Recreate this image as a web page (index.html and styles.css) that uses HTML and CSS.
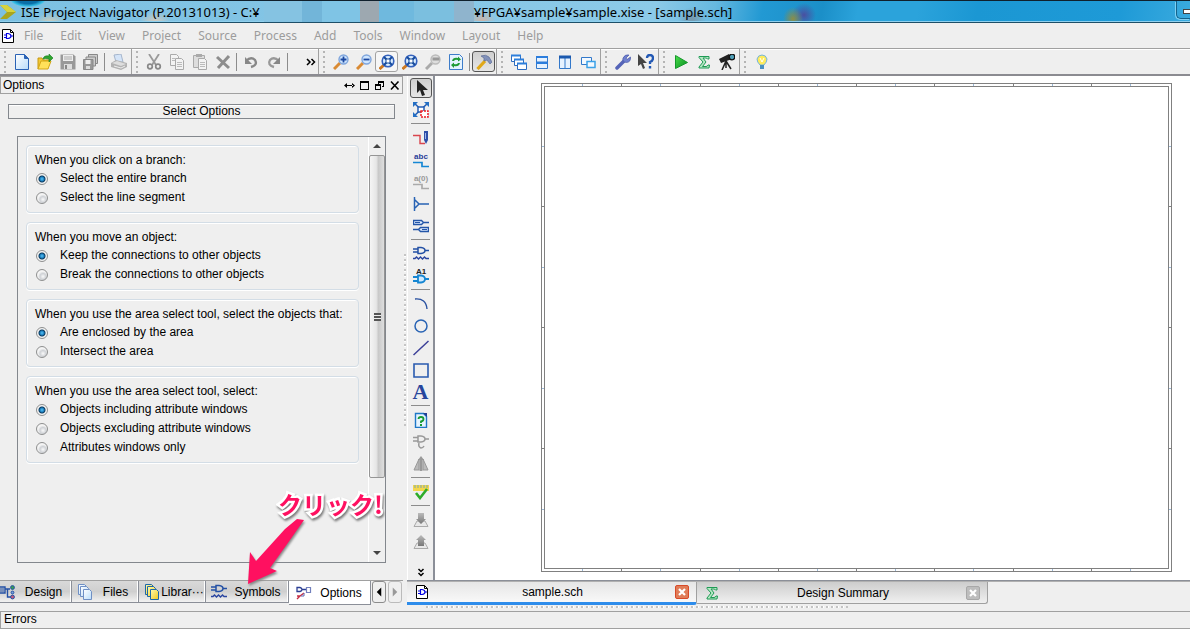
FILE: index.html
```html
<!DOCTYPE html>
<html lang="en">
<head>
    <meta charset="UTF-8">
    <meta name="viewport" content="width=device-width, initial-scale=1.0">
    <title>ISE Project Navigator</title>
    <link rel="stylesheet" href="styles.css">
</head>
<body>
    <!-- shared gradients and icons used more than once -->
    <svg class="defs" aria-hidden="true">
        <defs>
            <linearGradient id="g-page" x1="0" y1="0" x2="1" y2="1"><stop offset="0" stop-color="#fff"/><stop offset="1" stop-color="#b9dcfa"/></linearGradient>
            <linearGradient id="g-gray" x1="0" y1="0" x2="0" y2="1"><stop offset="0" stop-color="#bbb"/><stop offset="1" stop-color="#777"/></linearGradient>
            <linearGradient id="g-green" x1="0" y1="0" x2="1" y2="1"><stop offset="0" stop-color="#4be04b"/><stop offset="1" stop-color="#058a20"/></linearGradient>
            <linearGradient id="g-yellow" x1="0" y1="0" x2="1" y2="1"><stop offset="0" stop-color="#fffbb0"/><stop offset="1" stop-color="#f2c81c"/></linearGradient>
        </defs>
        <symbol id="i-sch" viewBox="0 0 16 16">
            <path d="M2.500 1.500h8l3 3v10h-11z" fill="#fff" stroke="#000"/>
            <path d="M10.500 1.500v3h3" fill="none" stroke="#000"/>
            <path d="M6.500 5.500h1.500q3 .5 3 2.500t-3 2.500h-1.500zM4 7h2.500M4 9.500h2.500M11 8h2" fill="none" stroke="#0000e0" stroke-width="1.200"/>
        </symbol>
        <symbol id="i-sigma" viewBox="0 0 16 16">
            <path d="M3 2.500h10v2.500h-1.500q-.5-1-2-1h-2.500l3 4-3.500 4.500h3.500q1.500 0 2-1.500h1.500l-.5 3h-10v-1l4-5-4-4.500z" fill="#b5e8c4" stroke="#1f9a55"/>
        </symbol>
        <symbol id="i-gate" viewBox="0 0 16 16">
            <path d="M5 1.500h3q4 .5 4 3t-4 3h-3zM0 3h5M0 6h5M12 4.500h4" fill="none" stroke="#2350a5" stroke-width="1.500"/>
            <path d="M0 12.500h2l1.500-1.500 2 2 2-2 2 2 2-2 1.500 1.500h3" fill="none" stroke="#2a45a0" stroke-width="1.400"/>
        </symbol>
        <symbol id="i-zoomfull" viewBox="0 0 16 16">
            <path d="M5.500 10.500l-5 4.500" stroke="#cf7a22" stroke-width="3"/>
            <circle cx="9" cy="7" r="5.800" fill="#dbeeff" stroke="#3562bd" stroke-width="1.600"/>
            <path d="M5 3l8 8M13 3l-8 8" stroke="#154a9b" stroke-width="2"/>
            <rect x="7" y="5" width="4" height="4" fill="#fff" stroke="#154a9b"/>
        </symbol>
    </svg>

    <header class="titlebar">
        <svg class="app-logo" viewBox="0 0 16 16"><path d="M0 1h7l9 7-9 7H0l7-7z" fill="#aaa51d"/><path d="M0 1h7l9 7H7z" fill="#d6d33e"/></svg>
        <span class="title-text">ISE Project Navigator (P.20131013) - C:¥</span>
        <span class="title-mask"></span>
        <span class="title-text">¥FPGA¥sample¥sample.xise - [sample.sch]</span>
        <button class="minimize" aria-label="Minimize"><span></span></button>
    </header>

    <nav class="menubar">
        <svg class="menu-icon"><use href="#i-sch"/></svg>
        <a href="#">File</a>
        <a href="#">Edit</a>
        <a href="#">View</a>
        <a href="#">Project</a>
        <a href="#">Source</a>
        <a href="#">Process</a>
        <a href="#">Add</a>
        <a href="#">Tools</a>
        <a href="#">Window</a>
        <a href="#">Layout</a>
        <a href="#">Help</a>
    </nav>

    <div class="toolbars">
        <div class="toolbar">
            <button class="tool" aria-label="New"><svg viewBox="0 0 16 16"><path d="M1.500.5h9l4 4v11h-13z" fill="url(#g-page)" stroke="#2a62b5"/><path d="M10.500.5v4h4" fill="#2a62b5" stroke="#2a62b5"/></svg></button>
            <button class="tool" aria-label="Open"><svg viewBox="0 0 16 16"><path d="M1 15V4h4l1 2h6v3" fill="#f3c935" stroke="#c79812"/><path d="M1 15l3-8h10l-3 8z" fill="#ffe15a" stroke="#d3a515"/><path d="M6 5q1-4 6-3V0l4 4-4 4V5q-4-1-6 0z" fill="#2fa52f" stroke="#137a1c" stroke-width=".6"/></svg></button>
            <button class="tool" aria-label="Save"><svg viewBox="0 0 16 16"><path d="M.5.5h13l2 2v13H.5z" fill="#999"/><path d="M3 1h10v6H3z" fill="#eee"/><path d="M4 10h8v5H4z" fill="#ddd"/><path d="M5 11h2v4H5z" fill="#888"/><path d="M4 3h8M4 5h8" stroke="#aaa"/></svg></button>
            <button class="tool" aria-label="Save All"><svg viewBox="0 0 16 16"><path d="M5.500.5h9v9h-9z" fill="#ccc" stroke="#888"/><path d="M3 3h9.500v9H3z" fill="#ccc" stroke="#888"/><path d="M.5 5.500h9.500v10H.5z" fill="#999" stroke="#888"/><path d="M2.500 6h5v4h-5z" fill="#eee"/><path d="M3 12h4v3H3z" fill="#ddd"/></svg></button>
            <span class="sep"></span>
            <button class="tool" aria-label="Print"><svg viewBox="0 0 16 16"><path d="M3 1l7-1 2 8H5z" fill="#d4e4f8" stroke="#a5b5cb"/><path d="M0 9l5-3 11 3v4l-6 3-10-3z" fill="#b2b2b2"/><path d="M1 9l5-2 9 3-5 2z" fill="#ddd"/><path d="M3 12l7 2 4-2" fill="none" stroke="#eee"/></svg></button>
        </div>
        <div class="toolbar">
            <button class="tool" aria-label="Cut"><svg viewBox="0 0 16 16"><path d="M3 0l7 11M13 0L6 11" stroke="#999" stroke-width="1.800"/><circle cx="4" cy="12.500" r="2.300" fill="none" stroke="#888" stroke-width="1.700"/><circle cx="12" cy="12.500" r="2.300" fill="none" stroke="#888" stroke-width="1.700"/></svg></button>
            <button class="tool" aria-label="Copy"><svg viewBox="0 0 16 16"><path d="M1.500.5h6l2 2v9h-8z" fill="#f3f3f3" stroke="#aaa"/><path d="M6.500 4.500h6l2 2v9h-8z" fill="#f3f3f3" stroke="#aaa"/><path d="M8 8.500h5M8 10.500h5M8 12.500h5M3 4.500h3M3 6.500h3" stroke="#bbb"/></svg></button>
            <button class="tool" aria-label="Paste"><svg viewBox="0 0 16 16"><path d="M1.500 1.500h11v12h-11z" fill="#ddd" stroke="#aaa"/><path d="M4 0h6v3H4z" fill="#aaa"/><path d="M6.500 4.500h6l2 2v9h-8z" fill="#f3f3f3" stroke="#aaa"/><path d="M8 8.500h5M8 10.500h5M8 12.500h5" stroke="#bbb"/></svg></button>
            <button class="tool" aria-label="Delete"><svg viewBox="0 0 16 16"><path d="M2 3l12 11M14 2L3 14" stroke="#8d8d8d" stroke-width="3"/></svg></button>
            <span class="sep"></span>
            <button class="tool" aria-label="Undo"><svg viewBox="0 0 16 16"><path d="M3 7q5-5 9-1 3 5-4 7" fill="none" stroke="#888" stroke-width="2.400"/><path d="M2 3v7h7z" fill="#888"/></svg></button>
            <button class="tool" aria-label="Redo"><svg viewBox="0 0 16 16"><path d="M13 7Q8 2 4 6q-3 5 4 7" fill="none" stroke="#999" stroke-width="2.400"/><path d="M14 3v7H7z" fill="#888"/></svg></button>
            <span class="sep"></span>
            <button class="tool more" aria-label="More tools"><svg viewBox="0 0 16 16"><path d="M6 5l3 3-3 3M10.500 5l3 3-3 3" fill="none" stroke="#000" stroke-width="1.500"/></svg></button>
        </div>
        <div class="toolbar">
            <button class="tool" aria-label="Zoom In"><svg viewBox="0 0 16 16"><path d="M7 9l-6 6" stroke="#d98a33" stroke-width="3"/><circle cx="10.500" cy="5.500" r="4.500" fill="#cfe6ff" stroke="#7fa5dc" stroke-width="1.400"/><path d="M7.500 5.500h6M10.500 2.500v6" stroke="#1c48a0" stroke-width="1.800"/></svg></button>
            <button class="tool" aria-label="Zoom Out"><svg viewBox="0 0 16 16"><path d="M7 9l-6 6" stroke="#d98a33" stroke-width="3"/><circle cx="10.500" cy="5.500" r="4.500" fill="#cfe6ff" stroke="#7fa5dc" stroke-width="1.400"/><path d="M7.500 5.500h6" stroke="#1c48a0" stroke-width="1.800"/></svg></button>
            <button class="tool checked" aria-label="Zoom to Full View"><svg><use href="#i-zoomfull"/></svg></button>
            <button class="tool" aria-label="Zoom to Box"><svg><use href="#i-zoomfull"/></svg></button>
            <button class="tool" aria-label="Zoom to Selected"><svg viewBox="0 0 16 16"><path d="M7 9l-6 6" stroke="#aaa" stroke-width="3"/><circle cx="10.500" cy="5.500" r="4.500" fill="#ddd" stroke="#bbb" stroke-width="1.400"/><path d="M7.500 3.500h7v3h-7z" fill="#999"/></svg></button>
            <button class="tool" aria-label="Refresh"><svg viewBox="0 0 16 16"><path d="M1.500.5h10l3 3v12h-13z" fill="#e4f2ff" stroke="#3d7cc9"/><path d="M4 7q1-4 6-3V2.500L13 5.500l-3 2V6Q7 5 6 7z" fill="#1e9a35"/><path d="M12 9q-1 4-6 3v2l-3-3 3-2.500V10q3 1 4-1z" fill="#1e9a35"/></svg></button>
            <span class="sep"></span>
            <button class="tool pressed" aria-label="Build"><svg viewBox="0 0 16 16"><path d="M1.500 15L9 7" stroke="#e0a818" stroke-width="3.200"/><path d="M5 2q5-2 8 1l3 5-2 2-3-4-3 1V4z" fill="#8191ba" stroke="#5d6d98" stroke-width=".7"/></svg></button>
        </div>
        <div class="toolbar">
            <button class="tool" aria-label="Cascade"><svg viewBox="0 0 16 16"><g fill="#fff" stroke="#2d6cc0"><path d="M.5 1.500h9v6h-9z"/><path d="M3.500 5.500h9v6h-9z"/><path d="M6.500 9.500h9v6h-9z"/></g><path d="M0 1.500h10M3 5.500h10M6 9.500h10" stroke="#2d7fdc" stroke-width="2"/></svg></button>
            <button class="tool" aria-label="Tile Horizontally"><svg viewBox="0 0 16 16"><path d="M2.500 2.500h11v12h-11zM2 8h12" fill="#e6f2ff" stroke="#3278ca"/><path d="M2 3h12M2 9h12" stroke="#2b7ddd" stroke-width="2"/></svg></button>
            <button class="tool" aria-label="Tile Vertically"><svg viewBox="0 0 16 16"><path d="M2.500 2.500h11v12h-11zM8 2v12" fill="#e6f2ff" stroke="#3278ca"/><path d="M2 3h12" stroke="#1b59ae" stroke-width="3"/></svg></button>
            <button class="tool" aria-label="Float"><svg viewBox="0 0 16 16"><path d="M1.500 3.500h10v7h-10z" fill="#f3f9ff" stroke="#3278ca"/><path d="M7 7.500h8v6H7z" fill="#f3f9ff" stroke="#3ba1e8" stroke-width="1.500"/></svg></button>
        </div>
        <div class="toolbar">
            <button class="tool" aria-label="Preferences"><svg viewBox="0 0 16 16"><path d="M2 14l7-7" stroke="#5564b8" stroke-width="3.500" stroke-linecap="round"/><path d="M14 1l-3 3 1 1.500L15.500 3Q16 8 11.500 8.500 7 8 8 4 10 0 14 1z" fill="#6f80cf" stroke="#4857a8" stroke-width=".7"/></svg></button>
            <button class="tool" aria-label="Help"><svg viewBox="0 0 16 16"><path d="M0 0v12l3-2 2 5 2-1-2-5h4z" fill="#444"/><path d="M9 4q0-3 3-3t3 3-3 4v2" fill="none" stroke="#2258b4" stroke-width="2.300"/><path d="M10.800 12h2.400v2.500h-2.400z" fill="#2258b4"/></svg></button>
        </div>
        <div class="toolbar">
            <button class="tool" aria-label="Run"><svg viewBox="0 0 16 16"><path d="M2.500 1.500l12 7-12 6z" fill="url(#g-green)" stroke="#16982c"/></svg></button>
            <button class="tool" aria-label="Summary"><svg><use href="#i-sigma"/></svg></button>
            <button class="tool" aria-label="Analyze"><svg viewBox="0 0 16 16"><path d="M0 5l10-5 3 5L2 9z" fill="#222"/><circle cx="13" cy="3" r="2.800" fill="#4f9fb8" stroke="#111" stroke-width="1.300"/><path d="M7 7l-4 9M7 7v7M7 7l5 8" stroke="#222" stroke-width="1.500"/></svg></button>
        </div>
        <div class="toolbar last">
            <button class="tool" aria-label="Tips"><svg viewBox="0 0 16 16"><path d="M6 11Q3 8 3 5q1-4 5-4t5 4q0 3-3 6z" fill="#ffeb5c" stroke="#73b3df"/><path d="M6 4l2 4 2-4" fill="none" stroke="#fff"/><path d="M6 11h4v4H6z" fill="#4a90c0"/></svg></button>
        </div>
    </div>

    <main class="workspace">
        <aside class="dock">
            <div class="dock-title">
                <h2>Options</h2>
                <button aria-label="Move"><svg viewBox="0 0 11 11"><path d="M0 5.500L3 3v5zM11 5.500L8 3v5zM2 5h7v1H2z"/></svg></button>
                <button aria-label="Maximize"><svg viewBox="0 0 11 11"><path d="M1 1h9v9H1zM2 3v6h7V3z" fill-rule="evenodd"/></svg></button>
                <button aria-label="Float panel"><svg viewBox="0 0 11 11"><path d="M4 1h6v6H8V6h1V3H5v1H4zM1 4h6v6H1zM2 6v3h4V6z" fill-rule="evenodd"/></svg></button>
                <button aria-label="Close panel"><svg viewBox="0 0 11 11"><path d="M2 1.500l7.500 8M9.500 1.500L2 9.500" stroke="#000" stroke-width="1.600"/></svg></button>
            </div>
            <h3 class="select-title">Select Options</h3>
            <div class="options-frame">
                <form class="options">
                    <fieldset>
                        <legend>When you click on a branch:</legend>
                        <label><input type="radio" name="branch" checked>Select the entire branch</label>
                        <label><input type="radio" name="branch">Select the line segment</label>
                    </fieldset>
                    <fieldset>
                        <legend>When you move an object:</legend>
                        <label><input type="radio" name="move" checked>Keep the connections to other objects</label>
                        <label><input type="radio" name="move">Break the connections to other objects</label>
                    </fieldset>
                    <fieldset>
                        <legend>When you use the area select tool, select the objects that:</legend>
                        <label><input type="radio" name="area" checked>Are enclosed by the area</label>
                        <label><input type="radio" name="area">Intersect the area</label>
                    </fieldset>
                    <fieldset>
                        <legend>When you use the area select tool, select:</legend>
                        <label><input type="radio" name="attr" checked>Objects including attribute windows</label>
                        <label><input type="radio" name="attr">Objects excluding attribute windows</label>
                        <label><input type="radio" name="attr">Attributes windows only</label>
                    </fieldset>
                </form>
                <div class="scrollbar">
                    <span class="arrow up"></span>
                    <span class="thumb"><i></i></span>
                    <span class="arrow down"></span>
                </div>
            </div>
            <div class="dock-tabs">
                <button class="dock-tab design"><svg viewBox="0 0 16 16"><path d="M0 3h5v6H0M5 5h5M7.500 5v8H11" fill="none" stroke="#2350a5" stroke-width="1.400"/><path d="M0 5h4M0 7h4" stroke="#2350a5"/><circle cx="12.500" cy="3.500" r="1.900" fill="#3a9e54" stroke="#2350a5"/><circle cx="12.500" cy="8.500" r="1.400" fill="#7ba4dd" stroke="#2350a5"/><circle cx="12.500" cy="13" r="1.900" fill="#c65a7a" stroke="#2350a5"/></svg><span>Design</span></button>
                <button class="dock-tab files"><svg viewBox="0 0 16 16"><g fill="url(#g-page)" stroke="#6f8fc4"><path d="M1.500.5h6l2 2v8h-8z"/><path d="M3.500 2.500h6l2 2v8h-8z"/><path d="M6.500 5.500h6l2 2v8h-8z"/></g></svg><span>Files</span></button>
                <button class="dock-tab libraries"><svg viewBox="0 0 16 16"><g fill="url(#g-yellow)" stroke="#1d68a8"><path d="M1.500.5h6l2 2v8h-8z"/><path d="M3.500 2.500h6l2 2v8h-8z"/><path d="M6.500 5.500h6l2 2v8h-8z"/></g></svg><span>Librar···</span></button>
                <button class="dock-tab symbols"><svg><use href="#i-gate"/></svg><span>Symbols</span></button>
                <button class="dock-tab active"><svg viewBox="0 0 16 16"><path d="M1 2.500h3q2 .5 2 2t-2 2H1zM6 4.500h4" fill="none" stroke="#2b3f94" stroke-width="1.300"/><path d="M10.500 2.500h4v5h-4z" fill="none" stroke="#7280bd" stroke-width="1.200"/><path d="M1 11h3l4-3M1 14l3-3" fill="none" stroke="#c62f45" stroke-width="1.400"/><path d="M8 8v3H5" fill="none" stroke="#5a6cb8"/></svg><span>Options</span></button>
                <button class="tab-scroll" aria-label="Previous tabs"><svg viewBox="0 0 8 12"><path d="M7 0v12L1 6z" fill="#000"/></svg></button>
                <button class="tab-scroll" aria-label="Next tabs" disabled><svg viewBox="0 0 8 12"><path d="M1 0v12l6-6z" fill="#999"/></svg></button>
            </div>
            <div class="callout">
                <svg viewBox="0 0 60 70"><path d="M4 68l2-32 6 9 29-32 12-10 7 1-14 20-20 28 7 3z" fill="#ff1060"/></svg>
                <strong lang="ja">クリック!</strong>
            </div>
        </aside>

        <div class="splitter"></div>

        <section class="editor">
            <div class="editor-body">
                <div class="side-tools">
                    <button class="side-tool pressed" aria-label="Select"><svg viewBox="0 0 16 16"><path d="M4 0v13l3-3 2 6 3-1-2-5h5z" fill="#222"/></svg></button>
                    <button class="side-tool" aria-label="Zoom area"><svg viewBox="0 0 16 16"><path d="M1 1l14 13M15 1L1 14" stroke="#245eb5" stroke-width="1.600"/><path d="M0 0h5L0 5zM16 0h-5l5 5zM0 15h5l-5-5z" fill="#246fc4"/><rect x="5" y="5" width="6" height="5" fill="#fff" stroke="#245eb5" stroke-width="1.500"/><rect x="8" y="9" width="7" height="6" fill="#fff" stroke="#ee1c24" stroke-width="1.500" stroke-dasharray="2 1"/></svg></button>
                    <span class="side-sep"></span>
                    <button class="side-tool" aria-label="Add Wire"><svg viewBox="0 0 16 16"><path d="M0 5.500h7v8h5" fill="none" stroke="#d9464e" stroke-width="1.400"/><path d="M11 1h4v9l-2 4-2-4z" fill="#2e4ea8"/><path d="M12.500 3v6" stroke="#9db7eb"/></svg></button>
                    <button class="side-tool" aria-label="Add Net Name"><svg viewBox="0 0 16 16"><text x="8" y="7" class="glyph blue">abc</text><path d="M0 10.500h9v4h7" fill="none" stroke="#1687d4" stroke-width="1.700"/></svg></button>
                    <button class="side-tool" aria-label="Rename Bus"><svg viewBox="0 0 16 16"><text x="8" y="7" class="glyph gray">a(0)</text><path d="M0 10.500h9v4h7" fill="none" stroke="#aaa" stroke-width="1.700"/></svg></button>
                    <button class="side-tool" aria-label="Add Bus Tap"><svg viewBox="0 0 16 16"><path d="M1.500 1v14M2 4l4 4-4 4M6 8h10" fill="none" stroke="#2863b4" stroke-width="1.500"/></svg></button>
                    <button class="side-tool" aria-label="Add I/O Marker"><svg viewBox="0 0 16 16"><path d="M.5 2.500h8l2 2-2 2h-8zM10 4.500h6M15.500 9.500h-8l-2 2 2 2h8zM0 11.500h6" fill="#dbeaff" stroke="#2456a8" stroke-width="1.400"/><path d="M2 4.500h5M9 11.500h5" stroke="#2456a8"/></svg></button>
                    <span class="side-sep"></span>
                    <button class="side-tool" aria-label="Add Symbol"><svg><use href="#i-gate"/></svg></button>
                    <button class="side-tool" aria-label="Add Instance Name"><svg viewBox="0 0 16 16"><text x="8" y="6" class="glyph black">A1</text><path d="M5 7.500h3q4 .5 4 3.500t-4 3.500H5zM0 9h5M0 13h5M12 11h4" fill="#cfeaff" stroke="#1586d2" stroke-width="1.800"/></svg></button>
                    <span class="side-sep"></span>
                    <button class="side-tool" aria-label="Add Arc"><svg viewBox="0 0 16 16"><path d="M2 3q11-1 12 10" fill="none" stroke="#2850a0" stroke-width="1.400"/></svg></button>
                    <button class="side-tool" aria-label="Add Circle"><svg viewBox="0 0 16 16"><circle cx="8" cy="8" r="6" fill="none" stroke="#2863b4" stroke-width="1.500"/></svg></button>
                    <button class="side-tool" aria-label="Add Line"><svg viewBox="0 0 16 16"><path d="M.5 15L15.500 1" stroke="#3b3f98" stroke-width="1.500"/></svg></button>
                    <button class="side-tool" aria-label="Add Rectangle"><svg viewBox="0 0 16 16"><path d="M1 2h14v13H1z" fill="none" stroke="#2a5bb0" stroke-width="1.600"/></svg></button>
                    <button class="side-tool letter" aria-label="Add Text">A</button>
                    <span class="side-sep"></span>
                    <button class="side-tool" aria-label="Object Properties"><svg viewBox="0 0 16 16"><path d="M2.500 1.500h8l3 3v11h-11z" fill="#e6f4ff" stroke="#1f78c7" stroke-width="1.400"/><path d="M10 1h4v4z" fill="#233f90"/><path d="M5.500 7q0-2 2.500-2t2.500 2-2.500 2.500v1.500" fill="none" stroke="#169a30" stroke-width="1.800"/><path d="M7 12h2v2H7z" fill="#169a30"/></svg></button>
                    <button class="side-tool" aria-label="Rotate"><svg viewBox="0 0 16 16"><path d="M5 2h3q4 .5 4 3t-4 3H5zM0 3.500h5M0 7h5M12 5h4" fill="none" stroke="#999" stroke-width="1.500"/><path d="M6 9q-1 4 2 5 2 0 3-2" fill="none" stroke="#999" stroke-width="1.500"/></svg></button>
                    <button class="side-tool" aria-label="Mirror"><svg viewBox="0 0 16 16"><path d="M6 3v11H1zM10 3v11h5z" fill="#bbb" stroke="#999"/><path d="M8 0l3 4H9.500v11h-3V4H5z" fill="#999"/></svg></button>
                    <span class="side-sep"></span>
                    <button class="side-tool" aria-label="Check Schematic"><svg viewBox="0 0 16 16"><path d="M0 1h16v6H0z" fill="#f4d64b"/><path d="M2 1v3M5 1v3M8 1v3M11 1v3M14 1v3" stroke="#78a7b0"/><path d="M3 9l4 5 7-9" fill="none" stroke="#2eac2a" stroke-width="2.600"/></svg></button>
                    <span class="side-sep"></span>
                    <button class="side-tool" aria-label="Push into Symbol"><svg viewBox="0 0 16 16"><path d="M4 9h8l3 5.500H1z" fill="#e8e8e8" stroke="#aaa"/><path d="M5 1h6v6h2l-5 5-5-5h2z" fill="url(#g-gray)"/></svg></button>
                    <button class="side-tool" aria-label="Pop to Calling Schematic"><svg viewBox="0 0 16 16"><path d="M4 9h8l3 5.500H1z" fill="#e8e8e8" stroke="#aaa"/><path d="M8 1l5 5h-2v6H5V6H3z" fill="url(#g-gray)"/></svg></button>
                    <button class="side-tool overflow" aria-label="More"><svg viewBox="0 0 16 16"><path d="M5.500 4L8 6.500 10.500 4M5.500 8L8 10.500 10.500 8" fill="none" stroke="#000" stroke-width="1.500"/></svg></button>
                </div>
                <div class="canvas">
                    <div class="sheet">
                        <div class="ruler-x"><i></i><i></i><i></i><i></i><i></i><i></i><i></i><i></i></div>
                        <div class="ruler-y"><i></i><i></i><i></i><i></i></div>
                        <div class="sheet-page"></div>
                        <div class="ruler-y"><i></i><i></i><i></i><i></i></div>
                        <div class="ruler-x"><i></i><i></i><i></i><i></i><i></i><i></i><i></i><i></i></div>
                    </div>
                </div>
            </div>
            <div class="doc-tabs">
                <div class="doc-tab active">
                    <svg><use href="#i-sch"/></svg>
                    <a href="#">sample.sch</a>
                    <button aria-label="Close sample.sch"><svg viewBox="0 0 8 8"><path d="M1 1l6 6M7 1L1 7" stroke="#fff" stroke-width="2.200"/></svg></button>
                </div>
                <div class="doc-tab">
                    <svg><use href="#i-sigma"/></svg>
                    <a href="#">Design Summary</a>
                    <button aria-label="Close Design Summary"><svg viewBox="0 0 8 8"><path d="M1 1l6 6M7 1L1 7" stroke="#fff" stroke-width="2.200"/></svg></button>
                </div>
            </div>
        </section>
    </main>

    <div class="splitter-row"></div>
    <footer class="errors">Errors</footer>
</body>
</html>
```

FILE: styles.css
```css
*{
    box-sizing: border-box;
}
body{
    margin: 0;
    height: 100vh;
    display: flex;
    flex-direction: column;
    overflow: hidden;
    background-color: #efefef;
    color: #000;
    font-family: "Liberation Sans", "Noto Sans CJK JP", sans-serif;
    font-size: 12px;
}
button{
    margin: 0;
    padding: 0;
    border: 0;
    background: none;
    font: inherit;
    color: inherit;
}
svg{
    display: block;
    flex: none;
    width: 16px;
    height: 16px;
}
.defs{
    position: absolute;
    width: 0;
    height: 0;
}
h2,h3{
    margin: 0;
    font-size: 12px;
    font-weight: normal;
}

/* title bar */
.titlebar{
    flex: none;
    display: flex;
    align-items: center;
    height: 23px;
    border-top: 1px solid #10202c;
    border-bottom: 1px solid #1d4f68;
    box-shadow: inset 0 -1px #8fd0ee;
    background:
        radial-gradient(ellipse 18px 8px at 28px -2px, #0a6fa8 0 60%, #35c0e8 90%, transparent),
        radial-gradient(ellipse 16px 10px at 50px 22px, #d9cdb3, transparent),
        radial-gradient(ellipse 16px 12px at 155px 22px, #ddcbb8, transparent),
        radial-gradient(ellipse 14px 12px at 482px 20px, #cfb3a5, transparent),
        radial-gradient(ellipse 14px 12px at 692px 18px, #7796aa, transparent),
        radial-gradient(ellipse 10px 12px at 793px 18px, #8d8d45, transparent),
        radial-gradient(ellipse 12px 12px at 804px 14px, #4a4fa0, transparent),
        linear-gradient(100deg, #7cc0e2 0, #8ccae8 55%, #66b8e0 60%, #2299d3 64%, #1b8fc8 69%, #2ba3db 72%, #2ba3db 77%, #1b97d3 82%, #1e9ad7 94%, #3aaade 100%);
    font-family: "Noto Sans", "Noto Sans CJK JP", sans-serif;
    font-size: 13px;
    white-space: nowrap;
}
.app-logo{
    margin-right: 5px;
}
.title-mask{
    flex: none;
    align-self: stretch;
    width: 210px;
    margin-left: 4px;
    background: linear-gradient(90deg, #85c3e2 0 38px, #72b5d9 38px 58px, #7fc4e5 58px 96px, #9da8b0 96px 115px, #6fb9de 115px 150px, #7bbfdf 150px 190px, #8fb4cd 190px);
}
.minimize{
    align-self: flex-start;
    display: flex;
    justify-content: flex-end;
    align-items: center;
    width: 14px;
    height: 18px;
    margin-left: auto;
    border: 1px solid #14638c;
    border-width: 0 0 1px 1px;
    border-radius: 0 0 0 5px;
    box-shadow: -1px 1px #7fd0f2;
}
.minimize span{
    width: 7px;
    height: 5px;
    margin-top: 4px;
    border: 1px solid #444;
    border-right: 0;
    background-color: #fff;
}

/* menu */
.menubar{
    flex: none;
    display: flex;
    align-items: center;
    gap: 17px;
    height: 25px;
    font-family: "Noto Sans", sans-serif;
}
.menu-icon{
    margin-right: -9px;
}
.menubar a{
    color: #9c9c9c;
    text-decoration: none;
}

/* toolbars */
.toolbars{
    flex: none;
    display: flex;
    height: 28px;
    border-top: 1px solid #a0a0a0;
    border-bottom: 2px solid #8b8b91;
    box-shadow: inset 0 1px #fff;
}
.toolbar{
    display: flex;
    align-items: center;
    padding-right: 1px;
    border-right: 1px solid #a0a0a0;
}
.toolbar.last{
    border-right: 0;
}
.toolbar::before{
    content: "";
    width: 2px;
    height: 22px;
    margin: 0 4px;
    background: repeating-linear-gradient(#b4b4b4 0 2px, transparent 2px 5px);
}
.tool{
    display: flex;
    justify-content: center;
    align-items: center;
    width: 23px;
    height: 21px;
}
.tool.more{
    width: 27px;
    justify-content: flex-end;
}
.checked{
    border: 1px solid #a2a2a2;
    border-radius: 3px;
    background-color: #f6f6f6;
}
.pressed{
    border: 1px solid #555;
    border-radius: 3px;
    background: linear-gradient(#cfcfcf, #e6e6e6);
}
.sep{
    width: 1px;
    height: 18px;
    margin: 0 2px;
    background-color: #8c8c8c;
}

/* work area */
.workspace{
    flex: 1;
    display: flex;
    min-height: 0;
}
.dock{
    position: relative;
    flex: none;
    display: flex;
    flex-direction: column;
    width: 403px;
}
.dock-title{
    flex: none;
    display: flex;
    align-items: center;
    gap: 4px;
    height: 18px;
    padding: 0 2px;
    border: 1px solid #a0a0a0;
}
.dock-title h2{
    flex: 1;
}
.dock-title svg{
    width: 11px;
    height: 11px;
}
.select-title{
    flex: none;
    height: 15px;
    margin: 10px 8px 0;
    border: 1px solid #83878d;
    line-height: 13px;
    text-align: center;
    box-shadow: inset 0 1px #fff;
}
.options-frame{
    flex: 1;
    display: flex;
    min-height: 0;
    margin: 17px;
    border: 1px solid #83878d;
}
.options{
    flex: 1;
    display: flex;
    flex-direction: column;
    gap: 9px;
    min-width: 0;
    padding: 8px 9px 0 8px;
    overflow: hidden;
}
fieldset{
    min-width: 0;
    margin: 0;
    padding: 6px 8px;
    border: 1px solid #d3dde6;
    border-radius: 4px;
    box-shadow: inset 1px 1px #fff, 0 1px #fff;
}
legend{
    float: left;
    width: 100%;
    padding: 0;
    line-height: 16px;
    white-space: nowrap;
}
fieldset label{
    clear: both;
    display: flex;
    align-items: center;
    gap: 11px;
    height: 19px;
}
input[type=radio]{
    appearance: none;
    flex: none;
    width: 12px;
    height: 12px;
    margin: 2px 1px 0;
    border: 1px solid #8e8f8f;
    border-radius: 50%;
    background: radial-gradient(circle at 60% 65%, #fafafa 0, #cfd2d6 3px, #f4f4f4 5px);
}
input[type=radio]:checked{
    background: radial-gradient(circle at 50% 50%, #5cc4f5 0, #1a7fc0 2px, #0c3a5e 3px, #f4f4f4 4px);
}
.scrollbar{
    flex: none;
    display: flex;
    flex-direction: column;
    align-items: center;
    width: 17px;
    border-left: 1px solid #fff;
}
.arrow{
    flex: none;
    display: flex;
    align-items: center;
    justify-content: center;
    width: 16px;
    height: 18px;
}
.arrow::before{
    content: "";
    border-left: 4px solid transparent;
    border-right: 4px solid transparent;
}
.arrow.up::before{
    border-bottom: 4px solid #444;
}
.arrow.down{
    margin-top: auto;
}
.arrow.down::before{
    border-top: 4px solid #444;
}
.thumb{
    display: flex;
    align-items: center;
    justify-content: center;
    width: 16px;
    height: 76%;
    border: 1px solid #959595;
    border-radius: 2px;
    background: linear-gradient(90deg, #f5f5f5, #e6e6e6 45%, #c9c9c9 60%, #dedede);
}
.thumb i{
    width: 7px;
    height: 8px;
    background: repeating-linear-gradient(#555 0 2px, #eee 2px 3px);
}
.dock-tabs{
    flex: none;
    display: flex;
    align-items: flex-start;
    height: 24px;
    border-top: 1px solid #a0a0a0;
}
.dock-tab{
    display: flex;
    align-items: center;
    width: 67px;
    height: 22px;
    padding: 0 0 0 5px;
    border-right: 1px solid #8b8f98;
    border-bottom: 1px solid #8b8f98;
    box-shadow: inset -1px 0 #fff;
    background: linear-gradient(#d9d9d9, #cfcfcf 50%, #f2f2f2);
}
.dock-tab span{
    flex: 1;
    text-align: center;
}
.dock-tab.design{
    width: 72px;
    padding-left: 0;
}
.dock-tab.symbols{
    width: 83px;
}
.dock-tab.active{
    width: 82px;
    height: 24px;
    padding-left: 7px;
    background: #fff;
}
.tab-scroll{
    display: flex;
    align-items: center;
    justify-content: center;
    width: 14px;
    height: 22px;
    margin-left: 1px;
    border: 1px solid #8c8c8c;
    border-radius: 3px;
}
.tab-scroll:disabled{
    margin-left: 2px;
    border-color: #bbb;
}
.tab-scroll svg{
    width: 6px;
    height: 10px;
}

/* hint drawn over the panel */
.callout{
    position: absolute;
    right: 20px;
    bottom: 18px;
    width: 140px;
    height: 100px;
    pointer-events: none;
}
.callout svg{
    position: absolute;
    left: 1px;
    bottom: 0;
    width: 60px;
    height: 70px;
    filter: drop-shadow(1px 2px 1px #888);
}
.callout strong{
    position: absolute;
    right: 0;
    top: 0;
    color: #ff1060;
    font-family: "Noto Sans CJK JP", sans-serif;
    font-size: 24px;
    line-height: 36px;
    white-space: nowrap;
    -webkit-text-stroke: 5px #fff;
    paint-order: stroke fill;
    filter: drop-shadow(1px 2px 1px #777);
}

.splitter{
    flex: none;
    align-self: center;
    width: 2px;
    height: 172px;
    margin: 0 1px;
    background: repeating-linear-gradient(#c4c4c4 0 2px, #fff 2px 3px, transparent 3px 5px);
}

/* editor */
.editor{
    flex: 1;
    display: flex;
    flex-direction: column;
    min-width: 0;
}
.editor-body{
    flex: 1;
    display: flex;
    min-height: 0;
}
.side-tools{
    flex: none;
    display: flex;
    flex-direction: column;
    align-items: center;
    width: 26px;
    padding: 1px 1px 0;
    border-left: 1px solid #fff;
}
.side-tool{
    flex: none;
    display: flex;
    align-items: center;
    justify-content: center;
    width: 22px;
    height: 22px;
}
.side-tool.pressed{
    height: 20px;
    margin: 1px 0;
}
.side-tool.letter{
    color: #27469c;
    font-family: "Liberation Serif", serif;
    font-size: 22px;
    line-height: 22px;
    font-weight: bold;
}
.side-tool.overflow{
    margin-top: auto;
    margin-bottom: -4px;
}
.side-sep{
    flex: none;
    width: 19px;
    height: 1px;
    margin: 2px 0 3px;
    background-color: #8c8c8c;
}
.glyph{
    font-family: "Liberation Sans", sans-serif;
    font-size: 8px;
    font-weight: bold;
    text-anchor: middle;
}
.blue{
    fill: #283d98;
}
.gray{
    fill: #999;
}
.black{
    fill: #222;
}
.canvas{
    flex: 1;
    display: flex;
    min-width: 0;
    padding: 7px 18px 8px 106px;
    border-left: 2px solid #8b8f98;
    background-color: #fff;
}
.sheet{
    flex: 1;
    display: grid;
    grid-template: 2px 1fr 2px / 2px 1fr 2px;
    border: 1px solid #808080;
}
.ruler-x{
    grid-column: 1 / -1;
    display: flex;
    padding: 0 2px;
}
.ruler-y{
    display: flex;
    flex-direction: column;
}
.ruler-x i,.ruler-y i{
    flex: 1;
    background: linear-gradient(#9bb8d6, #9bb8d6) no-repeat center;
}
.ruler-x i{
    border-right: 1px solid #808080;
    background-size: 1px 2px;
}
.ruler-y i{
    border-bottom: 1px solid #808080;
    background-size: 2px 1px;
}
.ruler-x i:last-child,.ruler-y i:last-child{
    border: 0;
}
.sheet-page{
    border: 1px solid #808080;
}
.doc-tabs{
    flex: none;
    display: flex;
    align-items: flex-start;
    height: 24px;
    border-top: 1px solid #8b8f98;
    box-shadow: inset 0 1px #b0b0b0;
}
.doc-tab{
    display: flex;
    align-items: center;
    flex: 0 1 291px;
    height: 22px;
    margin-top: 1px;
    padding: 0 7px;
    border: 1px solid #a0a0a0;
    border-width: 0 1px 1px 0;
    border-radius: 0 0 3px 0;
    background: linear-gradient(#cdcdcd, #f0f0f0);
}
.doc-tab.active{
    flex-basis: 290px;
    height: 23px;
    border-bottom: 3px solid #2d8ceb;
    background: linear-gradient(#e6e6e6, #f8f8f8);
}
.doc-tab a{
    flex: 1;
    color: #000;
    text-align: center;
    text-decoration: none;
}
.doc-tab button{
    display: flex;
    align-items: center;
    justify-content: center;
    width: 14px;
    height: 14px;
    border: 1px solid #a8a8a8;
    border-radius: 2px;
    background-color: #bdbdbd;
}
.doc-tab.active button{
    border-color: #d84a28;
    background-color: #e07c58;
}
.doc-tab button svg{
    width: 8px;
    height: 8px;
}

/* bottom */
.splitter-row{
    flex: none;
    align-self: center;
    width: 422px;
    max-width: 100%;
    height: 2px;
    margin: 2px 0 3px 84px;
    background: repeating-linear-gradient(90deg, #c4c4c4 0 2px, #fff 2px 3px, transparent 3px 5px);
}
.errors{
    flex: none;
    height: 18px;
    padding-left: 3px;
    border: 1px solid #a0a0a0;
    border-right: 0;
    line-height: 15px;
}
```
